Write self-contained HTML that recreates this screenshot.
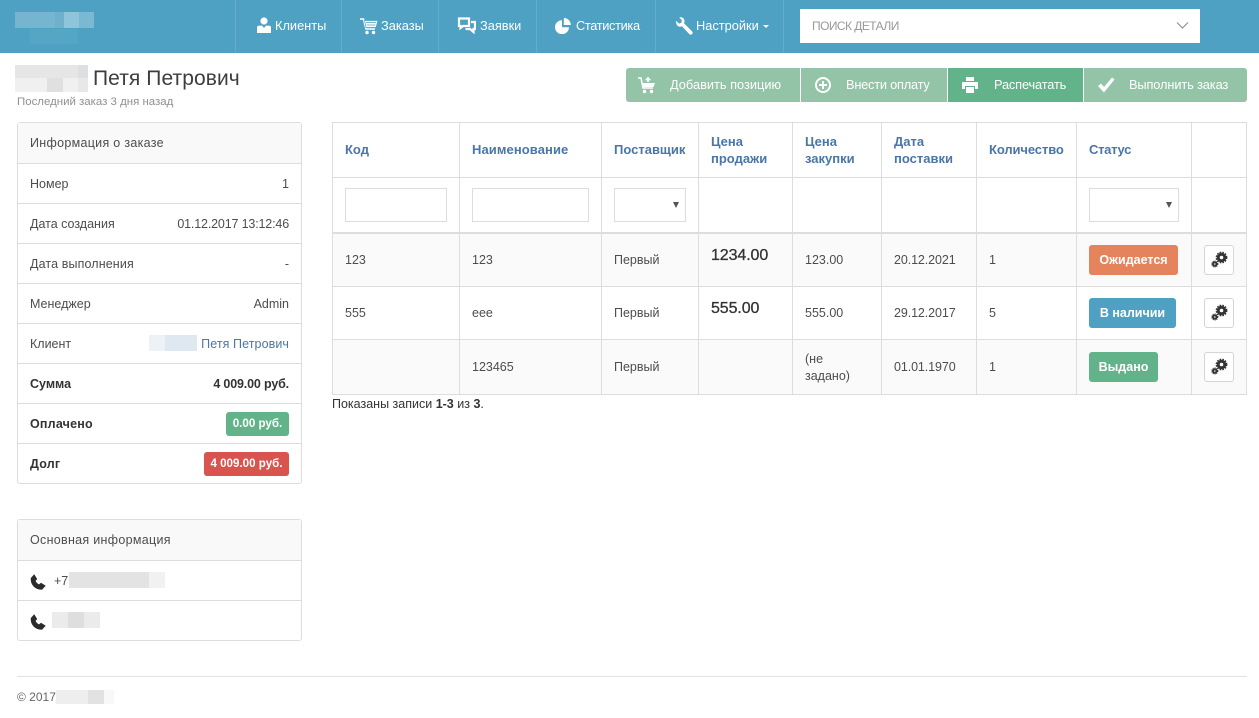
<!DOCTYPE html>
<html lang="ru"><head><meta charset="utf-8"><title>Заказ</title>
<style>
html,body{margin:0;padding:0;background:#fff}
body{width:1259px;height:718px;position:relative;overflow:hidden;font-family:"Liberation Sans","DejaVu Sans",sans-serif;font-size:12.5px;color:#4d4d4d}
.a,.t,svg{position:absolute}
.t{white-space:nowrap;line-height:18px}
.b{font-weight:bold}
.h{font-weight:bold;color:#4a76a8;font-size:13px;line-height:17px}
.n{color:#fff;font-size:12.8px}
.w{color:#fff;font-size:12.8px}
.l{background:#ddd}
.rc{border-radius:3px}
.in{border:1px solid #ddd;background:#fff;box-sizing:border-box;height:34px;top:188px}
.tri{width:0;height:0;border-left:3.5px solid transparent;border-right:3.5px solid transparent;border-top:6px solid #555}
.gb{width:30px;height:30px;border:1px solid #d5d5d5;border-radius:3px;background:#fff;box-sizing:border-box;left:1204px}
.p{font-size:16px;line-height:20px;color:#333;-webkit-text-stroke:.3px #333;letter-spacing:-.1px}
</style></head><body>

<!-- header -->
<div class="a" style="left:0;top:0;width:1259px;height:53px;background:#4ea1c3"></div>
<div class="a" style="left:15px;top:12px;width:40px;height:16px;background:#75b5cf"></div>
<div class="a" style="left:55px;top:12px;width:9px;height:16px;background:#6fb1cc"></div>
<div class="a" style="left:64px;top:12px;width:15px;height:16px;background:#8fc5da"></div>
<div class="a" style="left:79px;top:12px;width:15px;height:16px;background:#7ab9d2"></div>
<div class="a" style="left:30px;top:29px;width:48px;height:15px;background:#55a5c5"></div>
<div class="a" style="left:235px;top:0;width:1px;height:53px;background:#63adcb"></div>
<div class="a" style="left:341px;top:0;width:1px;height:53px;background:#63adcb"></div>
<div class="a" style="left:438px;top:0;width:1px;height:53px;background:#63adcb"></div>
<div class="a" style="left:536px;top:0;width:1px;height:53px;background:#63adcb"></div>
<div class="a" style="left:655px;top:0;width:1px;height:53px;background:#63adcb"></div>
<div class="a" style="left:783px;top:0;width:1px;height:53px;background:#63adcb"></div>

<svg style="left:256px;top:17px" width="16" height="17" viewBox="0 0 16 17"><circle cx="8" cy="4" r="3.6" fill="#fff"/><path d="M1 16V10.500C1 9 2 8.600 4 8.600H6L8 11 10 8.600H12C14 8.600 15 9 15 10.500V16Z" fill="#fff"/></svg>
<span class="t n" style="left:275px;top:17px">Клиенты</span>
<svg style="left:360px;top:18px" width="18" height="17" viewBox="0 0 18 17"><path d="M0 1H3.500L6 11H15" fill="none" stroke="#fff" stroke-width="1.600"/><path d="M4.500 2.500H18L16 9.500H6ZM6 4.600H16M6.500 7H15.500" fill="#fff" stroke="#4ea1c3" stroke-width=".7"/><circle cx="7" cy="14.500" r="1.700" fill="#fff"/><circle cx="13.500" cy="14.500" r="1.700" fill="#fff"/></svg>
<span class="t n" style="left:381px;top:17px">Заказы</span>
<svg style="left:457px;top:17px" width="19" height="17" viewBox="0 0 19 17"><path d="M2 1.500H12V9H6L3.500 11V9H2Z" fill="none" stroke="#fff" stroke-width="2.200"/><path d="M14 5H18V12H16.500V15L13 12H8.500" fill="none" stroke="#fff" stroke-width="2.200"/></svg>
<span class="t n" style="left:480px;top:17px">Заявки</span>
<svg style="left:555px;top:18px" width="16" height="16" viewBox="0 0 16 16"><path d="M7 2.200A7 7 0 1 0 14 9.200H7Z" fill="#fff"/><path d="M8.800 0A7 7 0 0 1 15.800 7H8.800Z" fill="#fff"/></svg>
<span class="t n" style="left:576px;top:17px;letter-spacing:-.35px">Статистика</span>
<svg style="left:675px;top:17px" width="18" height="18" viewBox="0 0 18 18"><path d="M1 3.800L4 6.600 6.400 5.800 6.800 3 4.200.6C6.500-.3 9 .9 9.400 3.400 9.600 4.600 9.400 5.400 9 6.200L17 14.200C18 15.400 17.600 16.600 17 17.200 16 18 15 17.800 14.200 17L7 9.200C5.500 10 3.800 9.900 2.500 8.800 1.300 7.700.8 5.500 1 3.800Z" fill="#fff"/></svg>
<span class="t n" style="left:696px;top:17px">Настройки</span>
<div class="a" style="left:763px;top:25px;width:0;height:0;border-left:3px solid transparent;border-right:3px solid transparent;border-top:3px solid #fff"></div>

<div class="a" style="left:800px;top:9px;width:400px;height:34px;background:#fff"></div>
<span class="t" style="left:812px;top:17px;color:#999;font-size:12px;letter-spacing:-.55px">ПОИСК ДЕТАЛИ</span>
<svg style="left:1176px;top:22px" width="13" height="8" viewBox="0 0 13 8"><path d="M1 .5L6.500 6 12 .5" fill="none" stroke="#888" stroke-width="1"/></svg>

<!-- title -->
<div class="a" style="left:15px;top:65px;width:73px;height:13px;background:#e6e6e6"></div>
<div class="a" style="left:15px;top:78px;width:73px;height:14px;background:#f0f0f0"></div>
<div class="a" style="left:47px;top:78px;width:16px;height:14px;background:#e0e0e0"></div>
<div class="a" style="left:78px;top:65px;width:10px;height:13px;background:#dedfe0"></div>
<div class="a" style="left:78px;top:78px;width:10px;height:14px;background:#e8e8e8"></div>
<span class="t" style="left:93px;top:66px;font-size:21px;line-height:25px;color:#3d3d3d;letter-spacing:.08px">Петя Петрович</span>
<span class="t" style="left:17px;top:93px;font-size:11.450px;color:#8f8f8f">Последний заказ 3 дня назад</span>

<!-- action buttons -->
<div class="a" style="left:626px;top:68px;width:174px;height:34px;background:#93c4a7;border-radius:3px 0 0 3px"></div>
<div class="a" style="left:801px;top:68px;width:146px;height:34px;background:#93c4a7"></div>
<div class="a" style="left:948px;top:68px;width:135px;height:34px;background:#63b38a"></div>
<div class="a" style="left:1084px;top:68px;width:163px;height:34px;background:#93c4a7;border-radius:0 3px 3px 0"></div>
<svg style="left:638px;top:76px" width="18" height="18" viewBox="0 0 18 18"><path d="M0 2H3L5 12H15" fill="none" stroke="#fff" stroke-width="1.600"/><path d="M4 7H17L15.500 11H5Z" fill="#fff"/><path d="M10 1V6M7.500 3.500H12.500" stroke="#fff" stroke-width="1.800"/><circle cx="6.500" cy="15.500" r="1.700" fill="#fff"/><circle cx="13.500" cy="15.500" r="1.700" fill="#fff"/></svg>
<span class="t w" style="left:670px;top:76px">Добавить позицию</span>
<svg style="left:814px;top:76px" width="18" height="18" viewBox="0 0 18 18"><circle cx="9" cy="9" r="7" fill="none" stroke="#fff" stroke-width="2"/><path d="M9 5V13M5 9H13" stroke="#fff" stroke-width="2"/></svg>
<span class="t w" style="left:846px;top:76px;letter-spacing:-.22px">Внести оплату</span>
<svg style="left:961px;top:76px" width="18" height="18" viewBox="0 0 18 18"><path d="M5 1H13V5H5ZM1 6H17V13H14V10H4V13H1ZM5 11H13V17H5Z" fill="#fff"/></svg>
<span class="t w" style="left:994px;top:76px;letter-spacing:-.15px">Распечатать</span>
<svg style="left:1097px;top:76px" width="18" height="18" viewBox="0 0 18 18"><path d="M1 10L4 7.500 7 11 15 1.500 17.500 3.500 7 16.500Z" fill="#fff"/></svg>
<span class="t w" style="left:1129px;top:76px;letter-spacing:-.12px">Выполнить заказ</span>

<!-- order panel -->
<div class="a rc" style="left:17px;top:122px;width:285px;height:362px;border:1px solid #ddd;box-sizing:border-box;background:#fff"></div>
<div class="a" style="left:18px;top:123px;width:283px;height:40px;background:#f9f9f9"></div>
<div class="a l" style="left:18px;top:163px;width:283px;height:1px"></div>
<div class="a l" style="left:18px;top:203px;width:283px;height:1px"></div>
<div class="a l" style="left:18px;top:243px;width:283px;height:1px"></div>
<div class="a l" style="left:18px;top:283px;width:283px;height:1px"></div>
<div class="a l" style="left:18px;top:323px;width:283px;height:1px"></div>
<div class="a l" style="left:18px;top:363px;width:283px;height:1px"></div>
<div class="a l" style="left:18px;top:403px;width:283px;height:1px"></div>
<div class="a l" style="left:18px;top:443px;width:283px;height:1px"></div>
<span class="t" style="left:30px;top:134px;letter-spacing:.3px">Информация о заказе</span>
<span class="t" style="left:30px;top:175px">Номер</span><span class="t" style="right:970px;top:175px">1</span>
<span class="t" style="left:30px;top:215px">Дата создания</span><span class="t" style="right:970px;top:215px;letter-spacing:-.16px">01.12.2017 13:12:46</span>
<span class="t" style="left:30px;top:255px;letter-spacing:.12px">Дата выполнения</span><span class="t" style="right:970px;top:255px">-</span>
<span class="t" style="left:30px;top:295px">Менеджер</span><span class="t" style="right:970px;top:295px">Admin</span>
<span class="t" style="left:30px;top:335px">Клиент</span>
<div class="a" style="left:149px;top:335px;width:16px;height:16px;background:#eef2f7"></div>
<div class="a" style="left:165px;top:335px;width:32px;height:16px;background:#dfe7f1"></div>
<span class="t" style="right:970px;top:335px;color:#4a76a8;letter-spacing:.08px">Петя Петрович</span>
<span class="t b" style="left:30px;top:375px;color:#333">Сумма</span><span class="t b" style="right:970px;top:375px;color:#333;letter-spacing:-.16px">4 009.00 руб.</span>
<span class="t b" style="left:30px;top:415px;color:#333;letter-spacing:.2px">Оплачено</span>
<div class="a rc" style="left:226px;top:412px;width:63px;height:24px;background:#63b38a"></div>
<span class="t b" style="left:226px;width:63px;text-align:center;top:415px;color:#fff;font-size:11.600px">0.00 руб.</span>
<span class="t b" style="left:30px;top:455px;color:#333;letter-spacing:.2px">Долг</span>
<div class="a rc" style="left:204px;top:452px;width:85px;height:24px;background:#d9534f"></div>
<span class="t b" style="left:204px;width:85px;text-align:center;top:455px;color:#fff;font-size:11.600px">4 009.00 руб.</span>

<!-- info panel -->
<div class="a rc" style="left:17px;top:519px;width:285px;height:122px;border:1px solid #ddd;box-sizing:border-box;background:#fff"></div>
<div class="a" style="left:18px;top:520px;width:283px;height:40px;background:#f9f9f9"></div>
<div class="a l" style="left:18px;top:560px;width:283px;height:1px"></div>
<div class="a l" style="left:18px;top:600px;width:283px;height:1px"></div>
<span class="t" style="left:30px;top:531px;letter-spacing:.3px">Основная информация</span>
<svg style="left:30px;top:574px" width="16" height="16" viewBox="0 0 16 16"><path d="M.8 4L4.200.3 7.200 5 5.600 7C6.200 8.400 7.600 9.800 9 10.400L11 8.800 15.700 11.800 12 15.700C5.200 15.800.2 10.800.8 4Z" fill="#2b2b2b"/></svg>
<span class="t" style="left:54px;top:572px">+7</span>
<div class="a" style="left:69px;top:572px;width:80px;height:16px;background:#e3e3e3"></div>
<div class="a" style="left:149px;top:572px;width:16px;height:16px;background:#f1f1f1"></div>
<svg style="left:30px;top:614px" width="16" height="16" viewBox="0 0 16 16"><path d="M.8 4L4.200.3 7.200 5 5.600 7C6.200 8.400 7.600 9.800 9 10.400L11 8.800 15.700 11.800 12 15.700C5.200 15.800.2 10.800.8 4Z" fill="#2b2b2b"/></svg>
<div class="a" style="left:52px;top:612px;width:48px;height:16px;background:#ebebeb"></div>
<div class="a" style="left:68px;top:612px;width:16px;height:16px;background:#dedede"></div>

<!-- table backgrounds -->
<div class="a" style="left:332px;top:234px;width:915px;height:52px;background:#fafafa"></div>
<div class="a" style="left:332px;top:340px;width:915px;height:54px;background:#fafafa"></div>
<!-- table lines -->
<div class="a l" style="left:332px;top:122px;width:915px;height:1px"></div>
<div class="a l" style="left:332px;top:177px;width:915px;height:1px"></div>
<div class="a l" style="left:332px;top:232px;width:915px;height:2px"></div>
<div class="a l" style="left:332px;top:286px;width:915px;height:1px"></div>
<div class="a l" style="left:332px;top:339px;width:915px;height:1px"></div>
<div class="a l" style="left:332px;top:394px;width:915px;height:1px"></div>
<div class="a l" style="left:332px;top:122px;width:1px;height:273px"></div>
<div class="a l" style="left:459px;top:122px;width:1px;height:273px"></div>
<div class="a l" style="left:601px;top:122px;width:1px;height:273px"></div>
<div class="a l" style="left:698px;top:122px;width:1px;height:273px"></div>
<div class="a l" style="left:792px;top:122px;width:1px;height:273px"></div>
<div class="a l" style="left:881px;top:122px;width:1px;height:273px"></div>
<div class="a l" style="left:976px;top:122px;width:1px;height:273px"></div>
<div class="a l" style="left:1076px;top:122px;width:1px;height:273px"></div>
<div class="a l" style="left:1191px;top:122px;width:1px;height:273px"></div>
<div class="a l" style="left:1246px;top:122px;width:1px;height:273px"></div>

<!-- table header -->
<span class="t h" style="left:345px;top:141px">Код</span>
<span class="t h" style="left:472px;top:141px;letter-spacing:.08px">Наименование</span>
<span class="t h" style="left:614px;top:141px">Поставщик</span>
<span class="t h" style="left:711px;top:133px">Цена<br>продажи</span>
<span class="t h" style="left:805px;top:133px">Цена<br>закупки</span>
<span class="t h" style="left:894px;top:133px">Дата<br>поставки</span>
<span class="t h" style="left:989px;top:141px;letter-spacing:-.1px">Количество</span>
<span class="t h" style="left:1089px;top:141px;letter-spacing:-.3px">Статус</span>

<!-- filters -->
<div class="a in" style="left:345px;width:102px"></div>
<div class="a in" style="left:472px;width:117px"></div>
<div class="a in" style="left:614px;width:72px"></div>
<div class="a tri" style="left:673px;top:202px"></div>
<div class="a in" style="left:1089px;width:90px"></div>
<div class="a tri" style="left:1166px;top:202px"></div>

<!-- rows -->
<span class="t" style="left:345px;top:251px">123</span>
<span class="t" style="left:472px;top:251px">123</span>
<span class="t" style="left:614px;top:251px">Первый</span>
<span class="t p" style="left:711px;top:246px">1234.00</span>
<span class="t" style="left:805px;top:251px">123.00</span>
<span class="t" style="left:894px;top:251px;letter-spacing:-.1px">20.12.2021</span>
<span class="t" style="left:989px;top:251px">1</span>
<div class="a rc" style="left:1089px;top:245px;width:89px;height:30px;background:#e5835d"></div>
<span class="t b" style="left:1089px;width:89px;text-align:center;top:251px;color:#fff">Ожидается</span>

<span class="t" style="left:345px;top:304px">555</span>
<span class="t" style="left:472px;top:304px">еее</span>
<span class="t" style="left:614px;top:304px">Первый</span>
<span class="t p" style="left:711px;top:299px">555.00</span>
<span class="t" style="left:805px;top:304px">555.00</span>
<span class="t" style="left:894px;top:304px;letter-spacing:-.1px">29.12.2017</span>
<span class="t" style="left:989px;top:304px">5</span>
<div class="a rc" style="left:1089px;top:298px;width:87px;height:30px;background:#4ea1c3"></div>
<span class="t b" style="left:1089px;width:87px;text-align:center;top:304px;color:#fff">В наличии</span>

<span class="t" style="left:472px;top:358px">123465</span>
<span class="t" style="left:614px;top:358px">Первый</span>
<span class="t" style="left:805px;top:351px;line-height:17px">(не<br>задано)</span>
<span class="t" style="left:894px;top:358px;letter-spacing:-.1px">01.01.1970</span>
<span class="t" style="left:989px;top:358px">1</span>
<div class="a rc" style="left:1089px;top:352px;width:69px;height:30px;background:#63b38a"></div>
<span class="t b" style="left:1089px;width:69px;text-align:center;top:358px;color:#fff">Выдано</span>

<!-- gear buttons -->
<div class="a gb" style="top:245px"></div>
<div class="a gb" style="top:298px"></div>
<div class="a gb" style="top:352px"></div>
<svg style="left:1211px;top:251px" width="17" height="17" viewBox="0 0 17 17"><circle cx="10.500" cy="6.500" r="3.300" fill="none" stroke="#333" stroke-width="3"/><circle cx="10.500" cy="6.500" r="5.200" fill="none" stroke="#333" stroke-width="1.400" stroke-dasharray="1.600 1.200"/><circle cx="3.800" cy="13" r="1.800" fill="none" stroke="#333" stroke-width="2"/><circle cx="3.800" cy="13" r="3.100" fill="none" stroke="#333" stroke-width=".9" stroke-dasharray="1 1"/></svg>
<svg style="left:1211px;top:304px" width="17" height="17" viewBox="0 0 17 17"><circle cx="10.500" cy="6.500" r="3.300" fill="none" stroke="#333" stroke-width="3"/><circle cx="10.500" cy="6.500" r="5.200" fill="none" stroke="#333" stroke-width="1.400" stroke-dasharray="1.600 1.200"/><circle cx="3.800" cy="13" r="1.800" fill="none" stroke="#333" stroke-width="2"/><circle cx="3.800" cy="13" r="3.100" fill="none" stroke="#333" stroke-width=".9" stroke-dasharray="1 1"/></svg>
<svg style="left:1211px;top:358px" width="17" height="17" viewBox="0 0 17 17"><circle cx="10.500" cy="6.500" r="3.300" fill="none" stroke="#333" stroke-width="3"/><circle cx="10.500" cy="6.500" r="5.200" fill="none" stroke="#333" stroke-width="1.400" stroke-dasharray="1.600 1.200"/><circle cx="3.800" cy="13" r="1.800" fill="none" stroke="#333" stroke-width="2"/><circle cx="3.800" cy="13" r="3.100" fill="none" stroke="#333" stroke-width=".9" stroke-dasharray="1 1"/></svg>

<span class="t" style="left:332px;top:395px;color:#333">Показаны записи <b>1-3</b> из <b>3</b>.</span>

<!-- footer -->
<div class="a" style="left:17px;top:676px;width:1230px;height:1px;background:#e2e2e2"></div>
<span class="t" style="left:17px;top:688px;color:#666;font-size:12px">© 2017</span>
<div class="a" style="left:56px;top:690px;width:32px;height:14px;background:#eeeeee"></div>
<div class="a" style="left:88px;top:690px;width:16px;height:14px;background:#e2e2e2"></div>
<div class="a" style="left:104px;top:690px;width:10px;height:14px;background:#f8f8f8"></div>
</body></html>
